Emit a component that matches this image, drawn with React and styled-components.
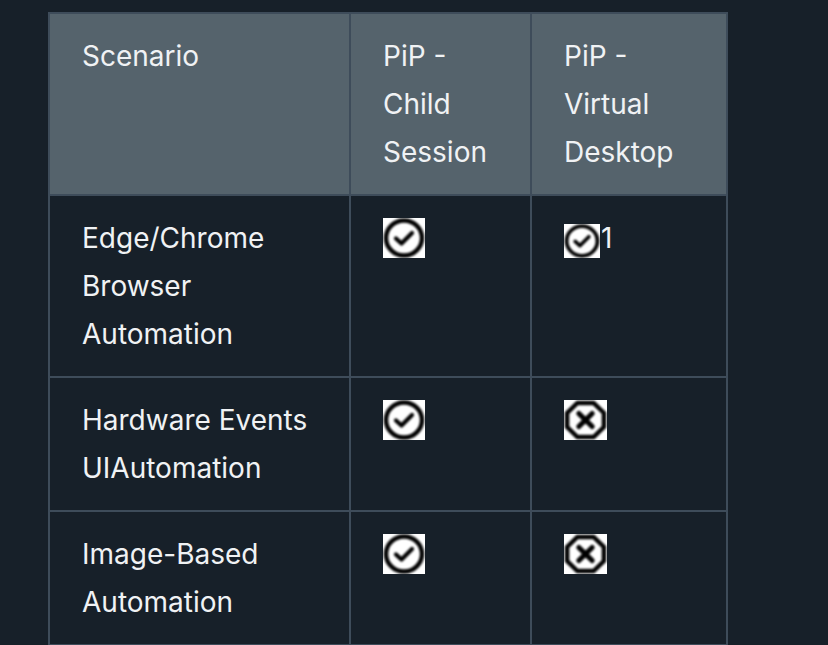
import React from "react";
import styled, { createGlobalStyle } from "styled-components";

const Global = createGlobalStyle`
  html, body { margin: 0; padding: 0; height: 100%; background: #172029; overflow: hidden; }
`;

const Page = styled.div`
  padding: 12px 0 0 48px;
  height: 645px;
  box-sizing: border-box;
  overflow: hidden;
  background: #172029;
  font-family: Inter, "Liberation Sans", sans-serif;
  font-size: 28px;
  font-weight: 400;
  line-height: 48px;
  color: #f0f2f4;
`;

const Table = styled.table`
  border-collapse: collapse;
  table-layout: fixed;
  width: 678px;
`;

const Col = styled.col`
  width: ${(p) => p.$w}px;
`;

const Head = styled.th`
  background: #55636c;
  border: 2px solid #3e4c5a;
  padding: 18px 24px 18px 32px;
  text-align: left;
  vertical-align: top;
  font-weight: 400;
`;

const Cell = styled.td`
  border: 2px solid #3e4c5a;
  padding: 18px 24px 18px 32px;
  vertical-align: top;
`;

const Note = styled.span`
  vertical-align: 2px;
  margin-left: 1px;
`;

const IconSvg = styled.svg`
  display: inline-block;
  vertical-align: ${(p) => p.$align}px;
  background: #fff;
`;

function Status({ ok, w = 42, h = 40, align = -10 }) {
  return (
    <IconSvg $align={align} width={w} height={h} viewBox="0 0 42 40" preserveAspectRatio="none">
      <defs>
        <filter id="soft" x="-10%" y="-10%" width="120%" height="120%">
          <feGaussianBlur stdDeviation="1" />
        </filter>
      </defs>
      <g filter="url(#soft)" fill="none" stroke="#000">
        {ok ? (
          <>
            <ellipse cx="21" cy="20" rx="18" ry="17.5" strokeWidth="4.4" />
            <path d="M13 20.5l5.5 5 10.5-10.5" strokeWidth="4.2" strokeLinecap="round" strokeLinejoin="round" />
          </>
        ) : (
          <>
            <path d="M13 3h16l10 10v14L29 37H13L3 27V13z" strokeWidth="4.4" strokeLinejoin="round" />
            <path d="M14.5 13.5l13 13M27.5 13.5l-13 13" strokeWidth="5" strokeLinecap="round" />
          </>
        )}
      </g>
    </IconSvg>
  );
}

const rows = [
  { label: ["Edge/Chrome", "Browser", "Automation"], child: true, virtual: "note" },
  { label: ["Hardware Events", "UIAutomation"], child: true, virtual: false },
  { label: ["Image-Based", "Automation"], child: true, virtual: false },
];

export default function App() {
  return (
    <Page>
      <Global />
      <Table>
        <colgroup>
          <Col $w={301} />
          <Col $w={181} />
          <Col $w={196} />
        </colgroup>
        <thead>
          <tr>
            <Head>Scenario</Head>
            <Head>PiP -<br />Child<br />Session</Head>
            <Head>PiP -<br />Virtual<br />Desktop</Head>
          </tr>
        </thead>
        <tbody>
          {rows.map((r) => (
            <tr key={r.label[0]}>
              <Cell>
                {r.label.map((l, i) => (
                  <React.Fragment key={l}>
                    {i > 0 && <br />}
                    {l}
                  </React.Fragment>
                ))}
              </Cell>
              <Cell>
                <Status ok />
              </Cell>
              <Cell>
                {r.virtual === "note" ? (
                  <>
                    <Status ok w={36} h={34} align={-8} />
                    <Note>1</Note>
                  </>
                ) : (
                  <Status ok={false} w={43} />
                )}
              </Cell>
            </tr>
          ))}
        </tbody>
      </Table>
    </Page>
  );
}
